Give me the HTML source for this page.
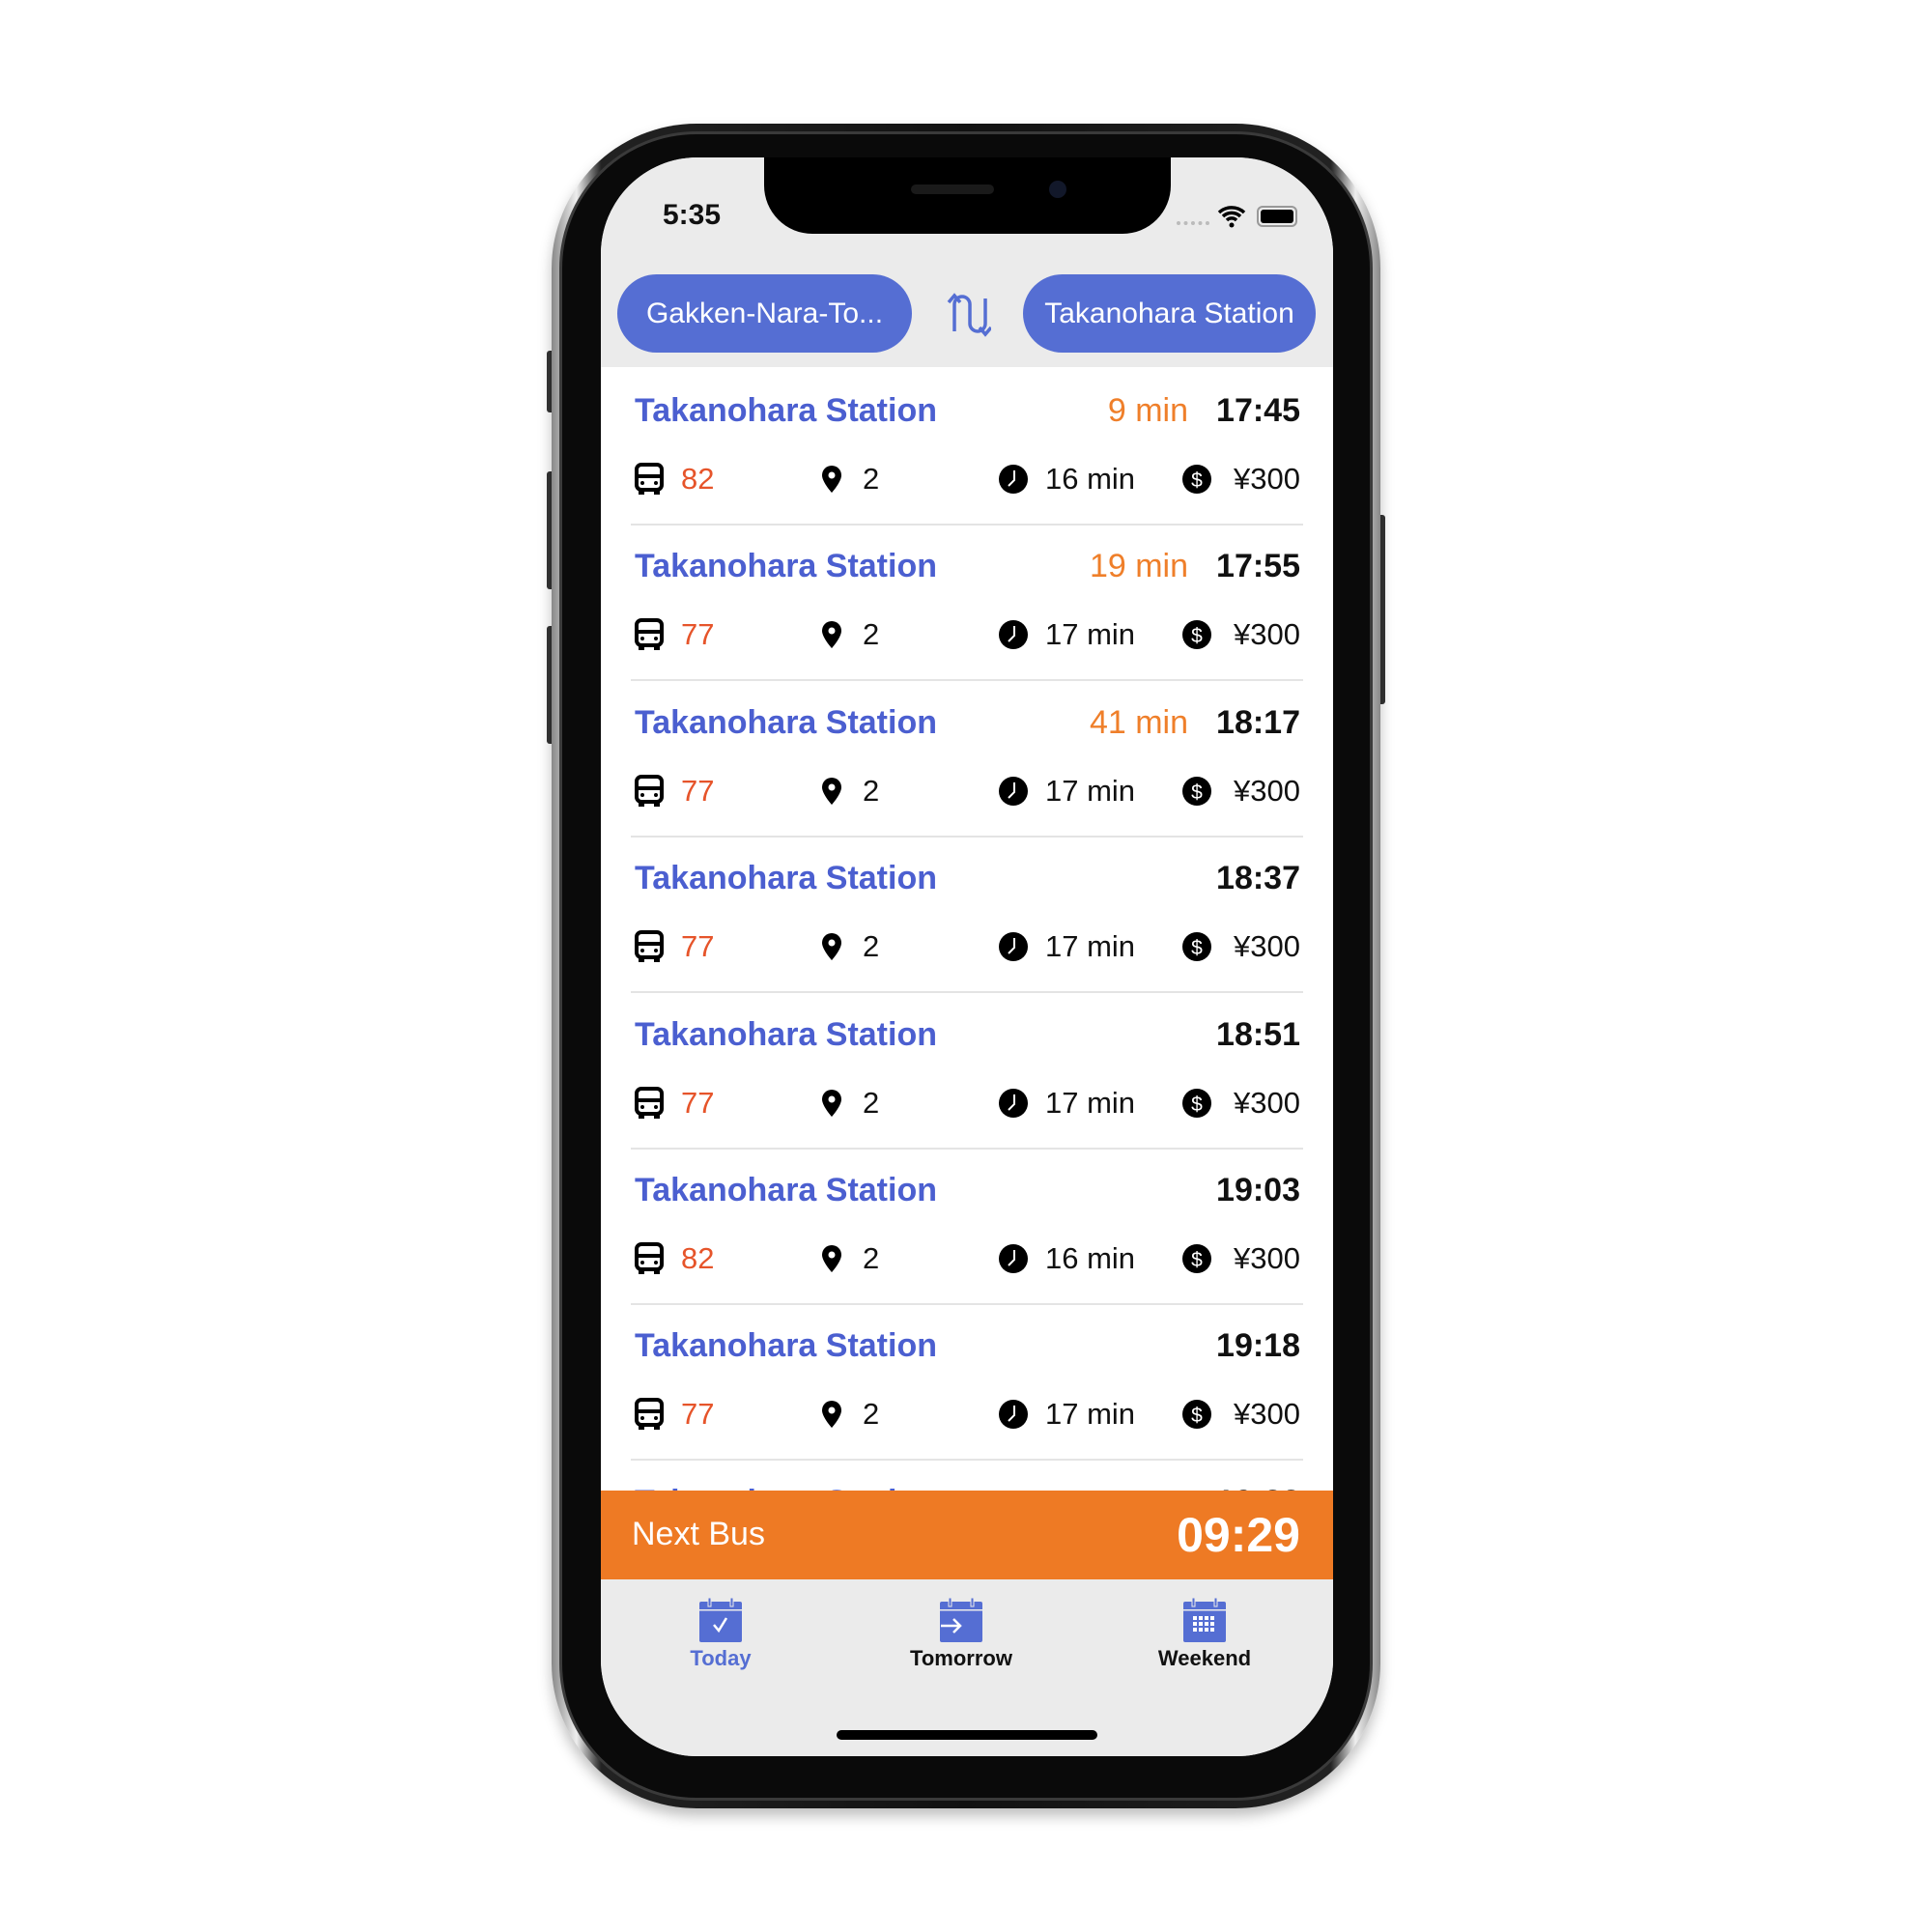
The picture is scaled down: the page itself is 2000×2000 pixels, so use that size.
<!DOCTYPE html>
<html><head><meta charset="utf-8"><style>
*{margin:0;padding:0;box-sizing:border-box}
body{width:2000px;height:2000px;background:#fff;position:relative;overflow:hidden;font-family:"Liberation Sans",sans-serif}
.abs{position:absolute}
.frame{left:571px;top:128px;width:858px;height:1744px;border-radius:150px;background:linear-gradient(90deg,#888,#eee 3%,#222 6%,#111 50%,#222 94%,#eee 97%,#888);box-shadow:0 8px 14px rgba(0,0,0,.25)}
.frame2{left:579px;top:136px;width:842px;height:1728px;border-radius:142px;background:#0a0a0a;border:3px solid #3a3a3a}
.screen{left:622px;top:163px;width:758px;height:1655px;border-radius:100px;background:#fff;overflow:hidden}
.btn{background:#333;border-radius:3px;width:8px}
.notch{left:169px;top:-10px;width:421px;height:89px;background:#000;border-radius:0 0 50px 50px}
.pill{background:#556ed3;color:#fff;border-radius:42px;height:81px;font-size:30px;line-height:81px;text-align:center}
.title{color:#4b5fd0;font-size:34px;font-weight:bold;left:35px}
.time{font-size:34px;font-weight:bold;color:#111;right:34px}
.mins{font-size:34px;color:#ef7f2a;right:150px}
.det{font-size:31px;color:#111}
.num{color:#e6542a}
.sep{left:31px;width:696px;height:2px;background:#e4e4e4}
.tab{font-size:22px;font-weight:bold;text-align:center;width:200px}
</style></head><body>
<div class="abs btn" style="left:566px;top:363px;height:64px"></div>
<div class="abs btn" style="left:566px;top:488px;height:122px"></div>
<div class="abs btn" style="left:566px;top:648px;height:122px"></div>
<div class="abs btn" style="left:1426px;top:533px;height:196px"></div>
<div class="abs frame"></div>
<div class="abs frame2"></div>
<div class="abs screen">
 <div class="abs" style="left:0;top:0;width:758px;height:217px;background:#ebebeb"></div>
 <div class="abs notch"></div>
 <div class="abs" style="left:321px;top:28px;width:86px;height:10px;border-radius:5px;background:#1a1a1a"></div>
 <div class="abs" style="left:464px;top:24px;width:18px;height:18px;border-radius:50%;background:#12182a"></div>
 <div class="abs" style="left:64px;top:43px;font-size:30px;font-weight:bold;color:#111">5:35</div>
 <div class="abs" style="left:596px;top:66px;width:34px;height:4px;border-top:4px dotted #bbb"></div>
 <svg class="abs" style="left:638px;top:49px" width="30" height="24" viewBox="0 0 30 24"><path d="M2 8a19 19 0 0 1 26 0M6 12a13 13 0 0 1 18 0M10 16a7 7 0 0 1 10 0" stroke="#000" stroke-width="3.5" fill="none"/><circle cx="15" cy="21" r="2.5"/></svg>
 <div class="abs" style="left:679px;top:50px;width:42px;height:22px;border:2px solid #999;border-radius:6px;padding:2px"><div style="width:100%;height:100%;background:#000;border-radius:3px"></div></div>
 <div class="abs pill" style="left:17px;top:121px;width:305px">Gakken-Nara-To...</div>
 <div class="abs pill" style="left:437px;top:121px;width:303px">Takanohara Station</div>
 <svg class="abs" style="left:358px;top:140px" width="46" height="46" viewBox="0 0 46 46"><path d="M8 40V12a8 8 0 0 1 16 0v20a8 8 0 0 0 16 0V6" stroke="#556ed3" stroke-width="3.5" fill="none"/><path d="M2 10l6-7 6 7M34 36l6 7 6-7" stroke="#556ed3" stroke-width="3.5" fill="none"/></svg>
 <div id="rows"></div>
 <div class="abs" style="left:0;top:1380px;width:758px;height:92px;background:#ee7a24"></div>
 <div class="abs" style="left:32px;top:1406px;font-size:34px;color:#fff">Next Bus</div>
 <div class="abs" style="right:34px;top:1397px;font-size:50px;font-weight:bold;color:#fff">09:29</div>
 <div class="abs" style="left:0;top:1472px;width:758px;height:200px;background:#ebebeb"></div>
 <svg class="abs" style="left:101px;top:1490px" width="46" height="48" viewBox="0 0 46 48"><rect x="1" y="5" width="44" height="42" rx="2" fill="#556ed3"/><rect x="1" y="13" width="44" height="1.5" fill="#ebebeb"/><rect x="10" y="1" width="3" height="9" fill="#556ed3" stroke="#ebebeb"/><rect x="33" y="1" width="3" height="9" fill="#556ed3" stroke="#ebebeb"/><path d="M16 29l5 6 8-13" stroke="#fff" stroke-width="2.5" fill="none"/></svg>
 <svg class="abs" style="left:350px;top:1490px" width="46" height="48" viewBox="0 0 46 48"><rect x="1" y="5" width="44" height="42" rx="2" fill="#556ed3"/><rect x="1" y="13" width="44" height="1.5" fill="#ebebeb"/><rect x="10" y="1" width="3" height="9" fill="#556ed3" stroke="#ebebeb"/><rect x="33" y="1" width="3" height="9" fill="#556ed3" stroke="#ebebeb"/><path d="M2 30h20M15 23l7 7-7 7" stroke="#fff" stroke-width="2.5" fill="none"/></svg>
 <svg class="abs" style="left:602px;top:1490px" width="46" height="48" viewBox="0 0 46 48"><rect x="1" y="5" width="44" height="42" rx="2" fill="#556ed3"/><rect x="1" y="13" width="44" height="1.5" fill="#ebebeb"/><rect x="10" y="1" width="3" height="9" fill="#556ed3" stroke="#ebebeb"/><rect x="33" y="1" width="3" height="9" fill="#556ed3" stroke="#ebebeb"/><g fill="#fff"><rect x="11" y="20" width="4" height="4"/><rect x="17" y="20" width="4" height="4"/><rect x="23" y="20" width="4" height="4"/><rect x="29" y="20" width="4" height="4"/><rect x="11" y="26" width="4" height="4"/><rect x="17" y="26" width="4" height="4"/><rect x="23" y="26" width="4" height="4"/><rect x="29" y="26" width="4" height="4"/><rect x="11" y="32" width="4" height="4"/><rect x="17" y="32" width="4" height="4"/><rect x="23" y="32" width="4" height="4"/><rect x="29" y="32" width="4" height="4"/></g></svg>
 <div class="abs tab" style="left:24px;top:1541px;color:#556ed3">Today</div>
 <div class="abs tab" style="left:273px;top:1541px;color:#111">Tomorrow</div>
 <div class="abs tab" style="left:525px;top:1541px;color:#111">Weekend</div>
 <div class="abs" style="left:244px;top:1628px;width:270px;height:10px;border-radius:5px;background:#000"></div>
</div>
<script>
var d=[["9 min","17:45","82","16"],["19 min","17:55","77","17"],["41 min","18:17","77","17"],["","18:37","77","17"],["","18:51","77","17"],["","19:03","82","16"],["","19:18","77","17"],["","19:33","77","17"]];
var h="";
var bus='<svg width="30" height="34" viewBox="0 0 30 34"><rect x="2" y="2" width="26" height="26" rx="5" fill="none" stroke="#000" stroke-width="4"/><rect x="2" y="12" width="26" height="4" fill="#000"/><rect x="4" y="26" width="6" height="7" fill="#000"/><rect x="20" y="26" width="6" height="7" fill="#000"/><circle cx="8" cy="21" r="2"/><circle cx="22" cy="21" r="2"/></svg>';
var pin='<svg width="22" height="30" viewBox="0 0 22 30"><path d="M11 1a10 10 0 0 0-10 10c0 7 10 18 10 18s10-11 10-18A10 10 0 0 0 11 1z"/><circle cx="11" cy="11" r="3.5" fill="#fff"/></svg>';
var clk='<svg width="30" height="30" viewBox="0 0 30 30"><circle cx="15" cy="15" r="15"/><path d="M16 6v10l-6 6" stroke="#fff" stroke-width="2" fill="none"/></svg>';
var dol='<svg width="30" height="30" viewBox="0 0 30 30"><circle cx="15" cy="15" r="15"/><text x="15" y="23" text-anchor="middle" fill="#fff" font-size="21" font-family="Liberation Sans">$</text></svg>';
for(var i=0;i<8;i++){var t=263+161.4*i;
h+='<div class="abs title" style="top:'+(t-20)+'px">Takanohara Station</div>';
if(d[i][0])h+='<div class="abs mins" style="top:'+(t-20)+'px">'+d[i][0]+'</div>';
h+='<div class="abs time" style="top:'+(t-20)+'px">'+d[i][1]+'</div>';
var y=t+70;
h+='<div class="abs" style="left:35px;top:'+(y-17)+'px">'+bus+'</div>';
h+='<div class="abs det num" style="left:83px;top:'+(y-18)+'px">'+d[i][2]+'</div>';
h+='<div class="abs" style="left:228px;top:'+(y-15)+'px">'+pin+'</div>';
h+='<div class="abs det" style="left:271px;top:'+(y-18)+'px">2</div>';
h+='<div class="abs" style="left:412px;top:'+(y-15)+'px">'+clk+'</div>';
h+='<div class="abs det" style="left:460px;top:'+(y-18)+'px">'+d[i][3]+' min</div>';
h+='<div class="abs" style="left:602px;top:'+(y-15)+'px">'+dol+'</div>';
h+='<div class="abs det" style="right:34px;top:'+(y-18)+'px">¥300</div>';
h+='<div class="abs sep" style="top:'+(t+116)+'px"></div>';}
document.getElementById("rows").innerHTML=h;
</script>
</body></html>
